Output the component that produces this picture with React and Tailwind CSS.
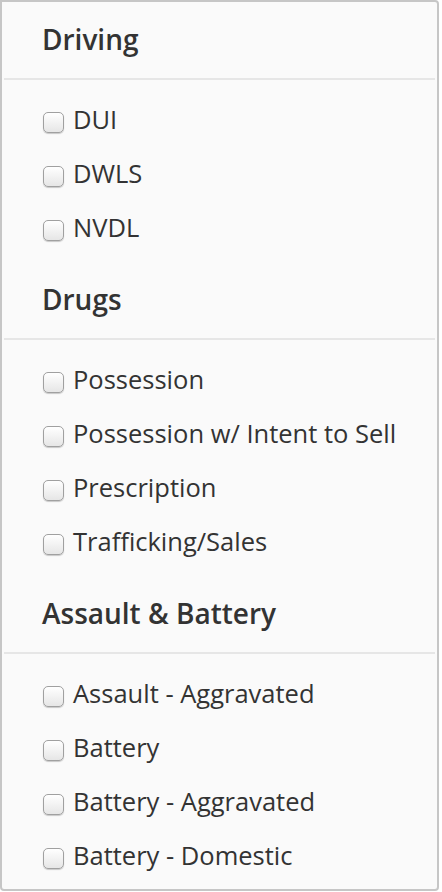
import { useState } from 'react';

const sections = [
  { title: 'Driving', items: ['DUI', 'DWLS', 'NVDL'] },
  { title: 'Drugs', items: ['Possession', 'Possession w/ Intent to Sell', 'Prescription', 'Trafficking/Sales'] },
  { title: 'Assault & Battery', items: ['Assault - Aggravated', 'Battery', 'Battery - Aggravated', 'Battery - Domestic'] },
];

const CheckRow = ({ label }) => {
  const [checked, setChecked] = useState(false);

  return (
    <li className="h-[54px] flex items-center">
      <label className="flex items-center gap-[9px] cursor-pointer select-none">
        <span
          onClick={() => setChecked(!checked)}
          className="mt-[6px] w-[21px] h-[21px] shrink-0 rounded-[5px] border border-[#a0a0a0] bg-gradient-to-b from-white to-[#e6e6e6] shadow-[0_1px_1px_rgba(0,0,0,0.2)] flex items-center justify-center"
        >
          {checked && (
            <svg viewBox="0 0 16 16" className="w-[14px] h-[14px]" fill="none" stroke="#333" strokeWidth={2.2}>
              <path d="M3 8.5l3.2 3.2L13 4.5" strokeLinecap="round" strokeLinejoin="round" />
            </svg>
          )}
        </span>
        <span className="text-[25.5px] leading-[54px] text-[#333]">{label}</span>
      </label>
    </li>
  );
};

export default function App() {
  return (
    <div className="min-h-screen bg-white" style={{ fontFamily: '"Open Sans", "Liberation Sans", sans-serif' }}>
      <div className="w-[439px] h-[891px] bg-[#fafafa] border-2 border-[#c6c6c6] rounded-[4px] rounded-tl-none pb-[7px]">
        {sections.map((section, i) => (
          <section key={section.title}>
            <h3 className={`pl-[40px] text-[28px] leading-[38px] font-semibold text-[#333] ${i === 0 ? 'mt-[18px]' : 'mt-[26px]'}`}>
              {section.title}
            </h3>
            <div className="mx-[2px] mt-[20px] h-[2px] bg-[#e6e6e6]" />
            <ul className="pt-[12px] pl-[41px]">
              {section.items.map((item) => (
                <CheckRow key={item} label={item} />
              ))}
            </ul>
          </section>
        ))}
      </div>
    </div>
  );
}
